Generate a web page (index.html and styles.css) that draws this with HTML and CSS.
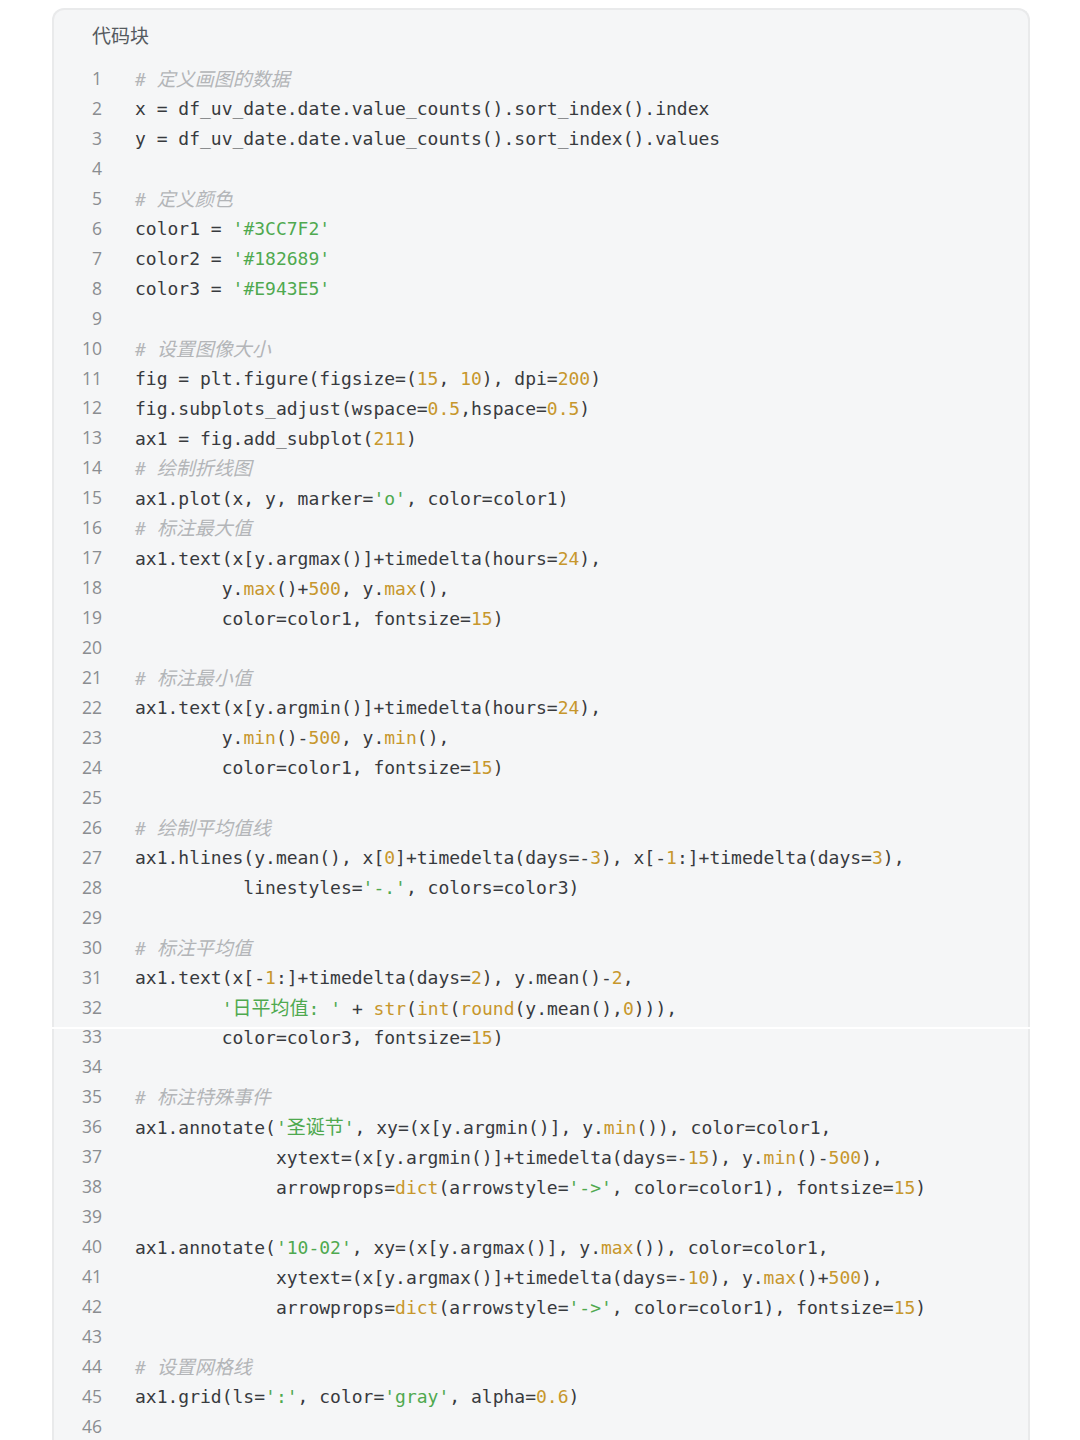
FILE: index.html
```html
<!DOCTYPE html>
<html lang="zh">
<head>
<meta charset="utf-8">
<title>代码块</title>
<link rel="stylesheet" href="styles.css">
</head>
<body>
<div class="card">
  <div class="title">代码块</div>
  <div class="code">
    <div class="row"><span class="ln">1</span><span class="src"><span class="c"># <span class="h">定义画图的数据</span></span></span></div>
    <div class="row"><span class="ln">2</span><span class="src">x = df_uv_date.date.value_counts().sort_index().index</span></div>
    <div class="row"><span class="ln">3</span><span class="src">y = df_uv_date.date.value_counts().sort_index().values</span></div>
    <div class="row"><span class="ln">4</span><span class="src"></span></div>
    <div class="row"><span class="ln">5</span><span class="src"><span class="c"># <span class="h">定义颜色</span></span></span></div>
    <div class="row"><span class="ln">6</span><span class="src">color1 = <span class="s">'#3CC7F2'</span></span></div>
    <div class="row"><span class="ln">7</span><span class="src">color2 = <span class="s">'#182689'</span></span></div>
    <div class="row"><span class="ln">8</span><span class="src">color3 = <span class="s">'#E943E5'</span></span></div>
    <div class="row"><span class="ln">9</span><span class="src"></span></div>
    <div class="row"><span class="ln">10</span><span class="src"><span class="c"># <span class="h">设置图像大小</span></span></span></div>
    <div class="row"><span class="ln">11</span><span class="src">fig = plt.figure(figsize=(<span class="n">15</span>, <span class="n">10</span>), dpi=<span class="n">200</span>)</span></div>
    <div class="row"><span class="ln">12</span><span class="src">fig.subplots_adjust(wspace=<span class="n">0.5</span>,hspace=<span class="n">0.5</span>)</span></div>
    <div class="row"><span class="ln">13</span><span class="src">ax1 = fig.add_subplot(<span class="n">211</span>)</span></div>
    <div class="row"><span class="ln">14</span><span class="src"><span class="c"># <span class="h">绘制折线图</span></span></span></div>
    <div class="row"><span class="ln">15</span><span class="src">ax1.plot(x, y, marker=<span class="s">'o'</span>, color=color1)</span></div>
    <div class="row"><span class="ln">16</span><span class="src"><span class="c"># <span class="h">标注最大值</span></span></span></div>
    <div class="row"><span class="ln">17</span><span class="src">ax1.text(x[y.argmax()]+timedelta(hours=<span class="n">24</span>),</span></div>
    <div class="row"><span class="ln">18</span><span class="src">        y.<span class="n">max</span>()+<span class="n">500</span>, y.<span class="n">max</span>(),</span></div>
    <div class="row"><span class="ln">19</span><span class="src">        color=color1, fontsize=<span class="n">15</span>)</span></div>
    <div class="row"><span class="ln">20</span><span class="src"></span></div>
    <div class="row"><span class="ln">21</span><span class="src"><span class="c"># <span class="h">标注最小值</span></span></span></div>
    <div class="row"><span class="ln">22</span><span class="src">ax1.text(x[y.argmin()]+timedelta(hours=<span class="n">24</span>),</span></div>
    <div class="row"><span class="ln">23</span><span class="src">        y.<span class="n">min</span>()-<span class="n">500</span>, y.<span class="n">min</span>(),</span></div>
    <div class="row"><span class="ln">24</span><span class="src">        color=color1, fontsize=<span class="n">15</span>)</span></div>
    <div class="row"><span class="ln">25</span><span class="src"></span></div>
    <div class="row"><span class="ln">26</span><span class="src"><span class="c"># <span class="h">绘制平均值线</span></span></span></div>
    <div class="row"><span class="ln">27</span><span class="src">ax1.hlines(y.mean(), x[<span class="n">0</span>]+timedelta(days=-<span class="n">3</span>), x[-<span class="n">1</span>:]+timedelta(days=<span class="n">3</span>),</span></div>
    <div class="row"><span class="ln">28</span><span class="src">          linestyles=<span class="s">'-.'</span>, colors=color3)</span></div>
    <div class="row"><span class="ln">29</span><span class="src"></span></div>
    <div class="row"><span class="ln">30</span><span class="src"><span class="c"># <span class="h">标注平均值</span></span></span></div>
    <div class="row"><span class="ln">31</span><span class="src">ax1.text(x[-<span class="n">1</span>:]+timedelta(days=<span class="n">2</span>), y.mean()-<span class="n">2</span>,</span></div>
    <div class="row"><span class="ln">32</span><span class="src">        <span class="s">'<span class="h">日平均值</span>: '</span> + <span class="n">str</span>(<span class="n">int</span>(<span class="n">round</span>(y.mean(),<span class="n">0</span>))),</span></div>
    <div class="row"><span class="ln">33</span><span class="src">        color=color3, fontsize=<span class="n">15</span>)</span></div>
    <div class="row"><span class="ln">34</span><span class="src"></span></div>
    <div class="row"><span class="ln">35</span><span class="src"><span class="c"># <span class="h">标注特殊事件</span></span></span></div>
    <div class="row"><span class="ln">36</span><span class="src">ax1.annotate(<span class="s">'<span class="h">圣诞节</span>'</span>, xy=(x[y.argmin()], y.<span class="n">min</span>()), color=color1,</span></div>
    <div class="row"><span class="ln">37</span><span class="src">             xytext=(x[y.argmin()]+timedelta(days=-<span class="n">15</span>), y.<span class="n">min</span>()-<span class="n">500</span>),</span></div>
    <div class="row"><span class="ln">38</span><span class="src">             arrowprops=<span class="n">dict</span>(arrowstyle=<span class="s">'-&gt;'</span>, color=color1), fontsize=<span class="n">15</span>)</span></div>
    <div class="row"><span class="ln">39</span><span class="src"></span></div>
    <div class="row"><span class="ln">40</span><span class="src">ax1.annotate(<span class="s">'10-02'</span>, xy=(x[y.argmax()], y.<span class="n">max</span>()), color=color1,</span></div>
    <div class="row"><span class="ln">41</span><span class="src">             xytext=(x[y.argmax()]+timedelta(days=-<span class="n">10</span>), y.<span class="n">max</span>()+<span class="n">500</span>),</span></div>
    <div class="row"><span class="ln">42</span><span class="src">             arrowprops=<span class="n">dict</span>(arrowstyle=<span class="s">'-&gt;'</span>, color=color1), fontsize=<span class="n">15</span>)</span></div>
    <div class="row"><span class="ln">43</span><span class="src"></span></div>
    <div class="row"><span class="ln">44</span><span class="src"><span class="c"># <span class="h">设置网格线</span></span></span></div>
    <div class="row"><span class="ln">45</span><span class="src">ax1.grid(ls=<span class="s">':'</span>, color=<span class="s">'gray'</span>, alpha=<span class="n">0.6</span>)</span></div>
    <div class="row"><span class="ln">46</span><span class="src"></span></div>
  </div>
  <div class="seam"></div>
</div>
</body>
</html>
```

FILE: styles.css
```css
html, body {
  margin: 0;
  padding: 0;
  background: #ffffff;
}

body {
  overflow: hidden;
  height: 1440px;
}

.card {
  position: relative;
  margin: 8px 0 0 52px;
  width: 978px;
  box-sizing: border-box;
  background: #f5f6f7;
  border: 2px solid #e9eaeb;
  border-bottom: none;
  border-radius: 12px 12px 0 0;
  padding: 9px 0 60px 0;
}

.title {
  padding-left: 38px;
  font-family: "Noto Sans CJK SC", "Noto Sans", sans-serif;
  font-size: 19px;
  line-height: 32px;
  color: #555a60;
}

.code {
  margin-top: 12px;
  display: flex;
  flex-direction: column;
}

.row {
  display: flex;
  align-items: center;
  height: 29.96px;
}

.ln {
  width: 48px;
  flex: none;
  text-align: right;
  font-family: "Open Sans", "Noto Sans", sans-serif;
  font-size: 17.5px;
  color: #8a8d91;
}

.src {
  margin-left: 33px;
  padding-top: 2px;
  white-space: pre;
  font-family: "DejaVu Sans Mono", "Noto Sans CJK SC", monospace;
  font-size: 18px;
  color: #383a3e;
}

.h {
  font-family: "Noto Sans CJK SC", sans-serif;
  font-size: 19px;
  line-height: 1;
}

.c {
  color: #b3b5b8;
  font-style: italic;
}

.s {
  color: #4fa94f;
}

.n {
  color: #c7972c;
}

.seam {
  position: absolute;
  left: -3px;
  right: -3px;
  top: 1017px;
  height: 2px;
  background: #ffffff;
}
```
